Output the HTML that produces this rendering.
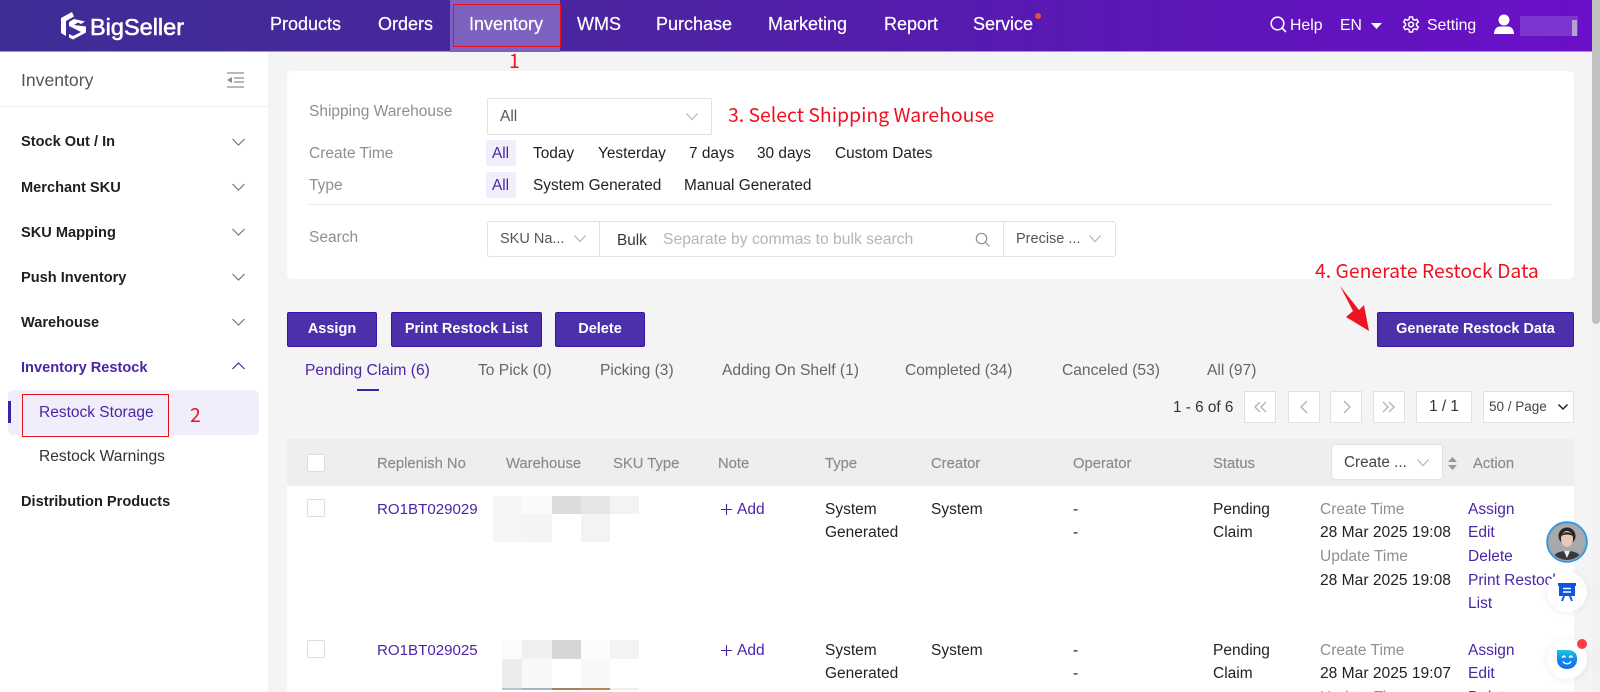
<!DOCTYPE html>
<html lang="en"><head><meta charset="utf-8"><title>BigSeller Inventory</title>
<style>
html,body{margin:0;padding:0;width:1600px;height:692px;overflow:hidden;background:#f4f4f4}
body{position:relative;font-family:"Liberation Sans",Arial,sans-serif;font-size:15.5px;color:#222}
.a,.t,.box{position:absolute}
.t{white-space:nowrap;line-height:20px;height:20px;margin-top:-9px}
.nav{color:#fff;font-size:18px;line-height:24px;margin-top:-13px;height:24px;-webkit-text-stroke:.2px #fff}
.side{font-weight:bold;font-size:14.6px;color:#1f1f1f}
.lab{color:#8f8f8f;font-size:15.5px}
.fl{font-size:15.4px}
.th{color:#8a8a8a;font-size:14.8px;-webkit-text-stroke:.15px #8a8a8a}
.tab{color:#666;font-size:15.6px}
.p{color:#4a25a8 !important}
.red{color:#f01020;font-family:"Noto Sans CJK SC","Liberation Sans",sans-serif;font-size:19.4px;line-height:26px;height:26px;margin-top:-13px}
.btn{position:absolute;top:312px;height:33px;line-height:33px;background:#4b2fab;border:1px solid #3a12a8;border-radius:2px;color:#fff;text-align:center;font-size:14.5px;font-weight:bold;box-sizing:content-box}
.pg{position:absolute;top:391px;height:30px;width:30px;background:#fff;border:1px solid #e2e2e2}
.cb{position:absolute;width:16px;height:16px;background:#fff;border:1px solid #dedede;border-radius:2px}
svg{position:absolute;overflow:visible}
.c{fill:none;stroke:#8d8d8d;stroke-width:1.2}
.c2{fill:none;stroke:#b5b5b5;stroke-width:1.2}
.m{position:absolute}
</style></head><body>

<!-- header -->
<div class="a" style="left:0;top:0;width:1592px;height:52px;background:linear-gradient(90deg,#3f2d96 0%,#4a259f 35%,#5b17b5 70%,#6a10c8 100%)"></div>
<div class="a" style="left:0;top:51px;width:1592px;height:1px;background:#a791d8"></div>
<svg style="left:59px;top:11px" width="28" height="30" viewBox="0 0 28 30"><path d="M13 1 2 7v15l5 3V10l8-4.500zM15 8l-5 3v4l12 6-8 4-4-2v3.500l4 2 13-7v-6L15 14l4-2.500 3 1.500 4-2.500z" fill="#fff"/></svg>
<div class="t" style="left:90px;top:27px;color:#fff;font-size:23.500px;-webkit-text-stroke:.6px #fff;line-height:26px;height:26px;margin-top:-13px">BigSeller</div>
<div class="a" style="left:450px;top:0;width:110px;height:52px;background:#7f62bf"></div>
<div class="a" style="left:453px;top:4px;width:106px;height:41px;border:1px solid #e8101c"></div>
<div class="t nav" style="left:270px;top:25px">Products</div>
<div class="t nav" style="left:378px;top:25px">Orders</div>
<div class="t nav" style="left:469px;top:25px">Inventory</div>
<div class="t nav" style="left:577px;top:25px">WMS</div>
<div class="t nav" style="left:656px;top:25px">Purchase</div>
<div class="t nav" style="left:768px;top:25px">Marketing</div>
<div class="t nav" style="left:884px;top:25px">Report</div>
<div class="t nav" style="left:973px;top:25px">Service</div>
<div class="a" style="left:1035px;top:13px;width:6px;height:6px;border-radius:50%;background:#f0483e"></div>
<svg style="left:1270px;top:16px" width="17" height="17" viewBox="0 0 17 17"><circle cx="7.500" cy="7.500" r="6.300" fill="none" stroke="#fff" stroke-width="1.600"/><path d="M12 12l4 4" stroke="#fff" stroke-width="1.600"/></svg>
<div class="t" style="left:1290px;top:25px;color:#fff;font-size:15.8px">Help</div>
<div class="t" style="left:1340px;top:25px;color:#fff;font-size:15.8px">EN</div>
<svg style="left:1371px;top:23px" width="11" height="7" viewBox="0 0 11 7"><path d="M0 0h11L5.500 6z" fill="#fff"/></svg>
<svg style="left:1402px;top:16px" width="18" height="18" viewBox="0 0 18 18"><path d="M7.500 1h3l.5 2.400 1.500.8 2.300-.8 1.500 2.600-1.800 1.600v1.800l1.800 1.600-1.500 2.600-2.300-.8-1.500.8-.5 2.400h-3L7 13.600l-1.500-.8-2.300.8-1.500-2.600 1.800-1.600V7.600L1.700 6l1.500-2.600 2.300.8L7 3.400z" fill="none" stroke="#fff" stroke-width="1.500"/><circle cx="9" cy="8.500" r="2.400" fill="none" stroke="#fff" stroke-width="1.500"/></svg>
<div class="t" style="left:1427px;top:25px;color:#fff;font-size:15.8px">Setting</div>
<svg style="left:1494px;top:14px" width="20" height="20" viewBox="0 0 20 20"><circle cx="10" cy="6" r="5.500" fill="#fff"/><path d="M0 20c0-5 3-7.500 6-7.500h8c3 0 6 2.500 6 7.500z" fill="#fff"/></svg>
<div class="a" style="left:1520px;top:16px;width:58px;height:20px;background:#7e35d0"></div>
<div class="a" style="left:1572px;top:20px;width:5px;height:16px;background:#b3a4cf"></div>

<!-- scrollbar -->
<div class="a" style="left:1592px;top:0;width:8px;height:692px;background:#f1f1f1"></div>
<div class="a" style="left:1592px;top:0;width:8px;height:324px;background:#c1c1c1;border-radius:0 0 4px 4px"></div>

<!-- sidebar -->
<div class="a" style="left:0;top:52px;width:268px;height:640px;background:#fff"></div>
<div class="a" style="left:0;top:106px;width:268px;height:1px;background:#efefef"></div>
<div class="t" style="left:21px;top:79px;font-size:17.6px;color:#555">Inventory</div>
<svg style="left:227px;top:72px" width="17" height="16" viewBox="0 0 17 16"><path d="M0 1h17M7 6h10M7 10h10M0 15h17" stroke="#a0a0a0" stroke-width="1.500"/><path d="M0 8l5-3v6z" fill="#8d8d8d"/></svg>
<div class="t side" style="left:21px;top:141px">Stock Out / In</div>
<div class="t side" style="left:21px;top:187px">Merchant SKU</div>
<div class="t side" style="left:21px;top:232px">SKU Mapping</div>
<div class="t side" style="left:21px;top:277px">Push Inventory</div>
<div class="t side" style="left:21px;top:322px">Warehouse</div>
<div class="t side p" style="left:21px;top:367px">Inventory Restock</div>
<svg style="left:232px;top:138px" width="13" height="240" viewBox="0 0 13 240"><g fill="none" stroke="#777" stroke-width="1.200"><path d="M.5 1l6 6 6-6M.5 46l6 6 6-6M.5 91l6 6 6-6M.5 136l6 6 6-6M.5 181l6 6 6-6"/><path d="M.5 231l6-6 6 6" stroke="#4a25a8"/></g></svg>
<div class="a" style="left:8px;top:390px;width:251px;height:45px;background:#f1eefb;border-radius:5px"></div>
<div class="a" style="left:8px;top:401px;width:3px;height:22px;background:#3c22a5"></div>
<div class="a" style="left:22px;top:394px;width:145px;height:41px;border:1px solid #e8101c"></div>
<div class="t p" style="left:39px;top:412px;font-size:15.5px">Restock Storage</div>
<div class="t red" style="left:190px;top:414px">2</div>
<div class="t" style="left:39px;top:456px;font-size:15.6px;color:#333">Restock Warnings</div>
<div class="t side" style="left:21px;top:501px">Distribution Products</div>

<div class="t red" style="left:509px;top:60px">1</div>

<!-- filter card -->
<div class="a" style="left:287px;top:71px;width:1287px;height:208px;background:#fff;border-radius:5px"></div>
<div class="t lab" style="left:309px;top:111px">Shipping Warehouse</div>
<div class="a" style="left:487px;top:98px;width:223px;height:35px;background:#fff;border:1px solid #e2e2e2;border-radius:2px"></div>
<div class="t" style="left:500px;top:116px;color:#555">All</div>
<svg style="left:686px;top:113px" width="12" height="7" viewBox="0 0 12 7"><path class="c2" d="M.5.500l5.500 6 5.500-6"/></svg>
<div class="t red" style="left:728px;top:114px">3. Select Shipping Warehouse</div>
<div class="t lab" style="left:309px;top:153px">Create Time</div>
<div class="a" style="left:486px;top:140px;width:30px;height:26px;background:#f1eefb;border-radius:2px"></div>
<div class="t p fl" style="left:492px;top:153px">All</div>
<div class="t fl" style="left:533px;top:153px">Today</div>
<div class="t fl" style="left:598px;top:153px">Yesterday</div>
<div class="t fl" style="left:689px;top:153px">7 days</div>
<div class="t fl" style="left:757px;top:153px">30 days</div>
<div class="t fl" style="left:835px;top:153px">Custom Dates</div>
<div class="t lab" style="left:309px;top:185px">Type</div>
<div class="a" style="left:486px;top:172px;width:30px;height:26px;background:#f1eefb;border-radius:2px"></div>
<div class="t p fl" style="left:492px;top:185px">All</div>
<div class="t fl" style="left:533px;top:185px">System Generated</div>
<div class="t fl" style="left:684px;top:185px">Manual Generated</div>
<div class="a" style="left:309px;top:204px;width:1243px;border-top:1px dotted #d8d8d8"></div>
<div class="t lab" style="left:309px;top:237px">Search</div>
<div class="a" style="left:487px;top:221px;width:627px;height:34px;background:#fff;border:1px solid #e2e2e2;border-radius:3px"></div>
<div class="a" style="left:599px;top:221px;width:1px;height:36px;background:#e2e2e2"></div>
<div class="a" style="left:1003px;top:221px;width:1px;height:36px;background:#e2e2e2"></div>
<div class="t" style="left:500px;top:238px;color:#555;font-size:14.5px">SKU Na...</div>
<svg style="left:574px;top:235px" width="12" height="7" viewBox="0 0 12 7"><path class="c2" d="M.5.500l5.500 6 5.500-6"/></svg>
<div class="t" style="left:617px;top:240px;font-size:15.3px;color:#333">Bulk</div>
<div class="t" style="left:663px;top:239px;font-size:15.7px;color:#b5b5b5">Separate by commas to bulk search</div>
<svg style="left:975px;top:232px" width="15" height="15" viewBox="0 0 15 15"><circle cx="6.500" cy="6.500" r="5.200" class="c" stroke="#777"/><path class="c" d="M10.500 10.500l4 4"/></svg>
<div class="t" style="left:1016px;top:238px;color:#555;font-size:14.5px">Precise ...</div>
<svg style="left:1089px;top:235px" width="12" height="7" viewBox="0 0 12 7"><path class="c2" d="M.5.500l5.500 6 5.500-6"/></svg>

<!-- actions -->
<div class="t red" style="left:1315px;top:270px">4. Generate Restock Data</div>
<svg style="left:1335px;top:282px" width="40" height="54" viewBox="1335 282 40 54"><path d="M1340 286L1359 310 1364 305 1369 331 1346 317 1353 311z" fill="#ee1522"/></svg>
<div class="btn" style="left:287px;width:88px">Assign</div>
<div class="btn" style="left:391px;width:149px">Print Restock List</div>
<div class="btn" style="left:555px;width:88px">Delete</div>
<div class="btn" style="left:1377px;width:195px">Generate Restock Data</div>

<!-- tabs -->
<div class="t tab p" style="left:305px;top:370px">Pending Claim (6)</div>
<div class="t tab" style="left:478px;top:370px">To Pick (0)</div>
<div class="t tab" style="left:600px;top:370px">Picking (3)</div>
<div class="t tab" style="left:722px;top:370px">Adding On Shelf (1)</div>
<div class="t tab" style="left:905px;top:370px">Completed (34)</div>
<div class="t tab" style="left:1062px;top:370px">Canceled (53)</div>
<div class="t tab" style="left:1207px;top:370px">All (97)</div>
<div class="a" style="left:357px;top:389px;width:22px;height:2px;background:#3c22a5"></div>

<!-- pager -->
<div class="t" style="left:1173px;top:407px;font-size:15.3px;color:#333">1 - 6 of 6</div>
<div class="pg" style="left:1244px"></div><div class="pg" style="left:1288px"></div><div class="pg" style="left:1330px"></div><div class="pg" style="left:1373px"></div>
<svg style="left:1244px;top:391px" width="162" height="32" viewBox="0 0 162 32"><g fill="none" stroke="#b8b8b8" stroke-width="1.500"><path d="M16 11l-5 5 5 5M22 11l-5 5 5 5"/><path d="M63 10l-6 6 6 6"/><path d="M100 10l6 6-6 6"/><path d="M139 11l5 5-5 5M145 11l5 5-5 5"/></g></svg>
<div class="a" style="left:1416px;top:391px;width:54px;height:30px;background:#fff;border:1px solid #e2e2e2;text-align:center;line-height:30px;font-size:15.3px;color:#333">1 / 1</div>
<div class="a" style="left:1483px;top:391px;width:89px;height:30px;background:#fff;border:1px solid #e2e2e2"></div>
<div class="t" style="left:1489px;top:406px;font-size:13.5px;color:#444">50 / Page</div>
<svg style="left:1558px;top:404px" width="10" height="6" viewBox="0 0 10 6"><path d="M.5.500L5 5 9.500.500" fill="none" stroke="#222" stroke-width="1.500"/></svg>

<!-- table -->
<div class="a" style="left:287px;top:439px;width:1287px;height:47px;background:#eeeeee"></div>
<div class="a" style="left:287px;top:486px;width:1287px;height:206px;background:#fff"></div>
<div class="cb" style="left:307px;top:454px"></div>
<div class="t th" style="left:377px;top:463px">Replenish No</div>
<div class="t th" style="left:506px;top:463px">Warehouse</div>
<div class="t th" style="left:613px;top:463px">SKU Type</div>
<div class="t th" style="left:718px;top:463px">Note</div>
<div class="t th" style="left:825px;top:463px">Type</div>
<div class="t th" style="left:931px;top:463px">Creator</div>
<div class="t th" style="left:1073px;top:463px">Operator</div>
<div class="t th" style="left:1213px;top:463px">Status</div>
<div class="a" style="left:1331px;top:444px;width:110px;height:34px;background:#fff;border:1px solid #e2e2e2;border-radius:4px"></div>
<div class="t" style="left:1344px;top:462px;font-size:15.3px;color:#444">Create ...</div>
<svg style="left:1417px;top:459px" width="12" height="7" viewBox="0 0 12 7"><path class="c2" d="M.5.500l5.500 6 5.500-6"/></svg>
<svg style="left:1448px;top:457px" width="9" height="13" viewBox="0 0 9 13"><path d="M4.500 0L9 5H0zM0 8h9l-4.500 5z" fill="#999"/></svg>
<div class="t th" style="left:1473px;top:463px">Action</div>

<!-- row 1 -->
<div class="cb" style="left:307px;top:499px"></div>
<div class="t p" style="left:377px;top:509px;font-size:15.1px">RO1BT029029</div>
<div class="m" style="left:493px;top:496px;width:29px;height:18px;background:#f6f6f6"></div>
<div class="m" style="left:522px;top:496px;width:30px;height:18px;background:#fafafa"></div>
<div class="m" style="left:552px;top:496px;width:29px;height:18px;background:#dcdcdc"></div>
<div class="m" style="left:581px;top:496px;width:29px;height:18px;background:#e6e6e6"></div>
<div class="m" style="left:610px;top:496px;width:29px;height:18px;background:#f3f3f3"></div>
<div class="m" style="left:493px;top:514px;width:29px;height:28px;background:#f6f6f6"></div>
<div class="m" style="left:522px;top:514px;width:30px;height:28px;background:#f4f4f4"></div>
<div class="m" style="left:581px;top:514px;width:29px;height:28px;background:#f3f3f3"></div>
<svg style="left:721px;top:504px" width="11" height="11" viewBox="0 0 11 11"><path d="M5.500 0v11M0 5.500h11" stroke="#4a25a8" stroke-width="1.100"/></svg>
<div class="t p" style="left:737px;top:509px;font-size:15.5px">Add</div>
<div class="t" style="left:825px;top:509px">System</div>
<div class="t" style="left:825px;top:532px">Generated</div>
<div class="t" style="left:931px;top:509px">System</div>
<div class="t" style="left:1073px;top:509px">-</div>
<div class="t" style="left:1073px;top:532px">-</div>
<div class="t" style="left:1213px;top:509px">Pending</div>
<div class="t" style="left:1213px;top:532px">Claim</div>
<div class="t lab" style="left:1320px;top:509px;font-size:15.5px">Create Time</div>
<div class="t" style="left:1320px;top:532px;font-size:15.6px">28 Mar 2025 19:08</div>
<div class="t lab" style="left:1320px;top:556px;font-size:15.5px">Update Time</div>
<div class="t" style="left:1320px;top:580px;font-size:15.6px">28 Mar 2025 19:08</div>
<div class="t p" style="left:1468px;top:509px">Assign</div>
<div class="t p" style="left:1468px;top:532px">Edit</div>
<div class="t p" style="left:1468px;top:556px">Delete</div>
<div class="t p" style="left:1468px;top:580px">Print Restock</div>
<div class="t p" style="left:1468px;top:603px">List</div>

<!-- row 2 -->
<div class="cb" style="left:307px;top:640px"></div>
<div class="t p" style="left:377px;top:650px;font-size:15.1px">RO1BT029025</div>
<div class="m" style="left:502px;top:640px;width:20px;height:19px;background:#fbfbfb"></div>
<div class="m" style="left:522px;top:640px;width:30px;height:19px;background:#f0f0f0"></div>
<div class="m" style="left:552px;top:640px;width:29px;height:19px;background:#d6d6d6"></div>
<div class="m" style="left:581px;top:640px;width:29px;height:19px;background:#fcfcfc"></div>
<div class="m" style="left:610px;top:640px;width:29px;height:19px;background:#f3f3f3"></div>
<div class="m" style="left:502px;top:659px;width:20px;height:29px;background:#ececec"></div>
<div class="m" style="left:522px;top:659px;width:30px;height:29px;background:#f8f8fa"></div>
<div class="m" style="left:581px;top:659px;width:29px;height:29px;background:#f8f8f8"></div>
<div class="m" style="left:502px;top:688px;width:20px;height:2px;background:#b8c4cc"></div>
<div class="m" style="left:522px;top:688px;width:30px;height:2px;background:#a8b4bc"></div>
<div class="m" style="left:552px;top:688px;width:29px;height:2px;background:#a87f60"></div>
<div class="m" style="left:581px;top:688px;width:29px;height:2px;background:#c08058"></div>
<div class="m" style="left:610px;top:688px;width:29px;height:2px;background:#eee"></div>
<svg style="left:721px;top:645px" width="11" height="11" viewBox="0 0 11 11"><path d="M5.500 0v11M0 5.500h11" stroke="#4a25a8" stroke-width="1.100"/></svg>
<div class="t p" style="left:737px;top:650px;font-size:15.5px">Add</div>
<div class="t" style="left:825px;top:650px">System</div>
<div class="t" style="left:825px;top:673px">Generated</div>
<div class="t" style="left:931px;top:650px">System</div>
<div class="t" style="left:1073px;top:650px">-</div>
<div class="t" style="left:1073px;top:673px">-</div>
<div class="t" style="left:1213px;top:650px">Pending</div>
<div class="t" style="left:1213px;top:673px">Claim</div>
<div class="t lab" style="left:1320px;top:650px;font-size:15.5px">Create Time</div>
<div class="t" style="left:1320px;top:673px;font-size:15.6px">28 Mar 2025 19:07</div>
<div class="t lab" style="left:1320px;top:697px;font-size:15.5px">Update Time</div>
<div class="t p" style="left:1468px;top:650px">Assign</div>
<div class="t p" style="left:1468px;top:673px">Edit</div>
<div class="t p" style="left:1468px;top:697px">Delete</div>

<!-- floating widgets -->
<svg style="left:1546px;top:521px" width="42" height="42" viewBox="0 0 42 42">
<defs><clipPath id="av"><circle cx="21" cy="21" r="18"/></clipPath></defs>
<circle cx="21" cy="21" r="20" fill="#9aa0a6" stroke="#1a9af0" stroke-width="1.500"/>
<g clip-path="url(#av)"><rect width="42" height="42" fill="#a7a9ab"/><path d="M5 42c1-9 7-12 16-12s15 3 16 12z" fill="#3a3a3e"/><path d="M18 30l3 7 3-7z" fill="#eee"/><circle cx="21" cy="15" r="8.500" fill="#2a2422"/><ellipse cx="21" cy="18" rx="6" ry="8" fill="#e6c9b8"/><path d="M15 15c2-5 10-5 12 0-4-2-8-2-12 0z" fill="#2a2422"/></g></svg>
<div class="a" style="left:1547px;top:572px;width:40px;height:40px;border-radius:50%;background:#fff;box-shadow:0 1px 8px rgba(0,0,0,.08)"></div>
<svg style="left:1558px;top:582px" width="18" height="20" viewBox="0 0 18 20"><path d="M0 1h18v3h-1v10h-4l2 5h-2l-2-5H7l-2 5H3l2-5H1V4H0z" fill="#0f55e0"/><path d="M5 6.500h8M5 10h8" stroke="#fff" stroke-width="1.500"/></svg>
<div class="a" style="left:1547px;top:639px;width:40px;height:40px;border-radius:50%;background:#fff;box-shadow:0 1px 8px rgba(0,0,0,.08)"></div>
<svg style="left:1557px;top:650px" width="20" height="19" viewBox="0 0 20 19"><defs><linearGradient id="gm" x1="0" y1="0" x2="0" y2="1"><stop offset="0" stop-color="#1cc8d8"/><stop offset=".5" stop-color="#1288ec"/><stop offset="1" stop-color="#0f6fe8"/></linearGradient></defs><path d="M0 0h11c5 0 9 3 9 8v2c0 5-4 9-10 9S0 15 0 10z" fill="url(#gm)"/><path d="M5 7.500l2-1.500 1.500 1.500M12 7.500l2-1.500 1.500 1.500M6 11.500c2 3 6 3 8 0" fill="none" stroke="#fff" stroke-width="1.500"/></svg>
<div class="a" style="left:1577px;top:639px;width:10px;height:10px;border-radius:50%;background:#f5404a"></div>
</body></html>
